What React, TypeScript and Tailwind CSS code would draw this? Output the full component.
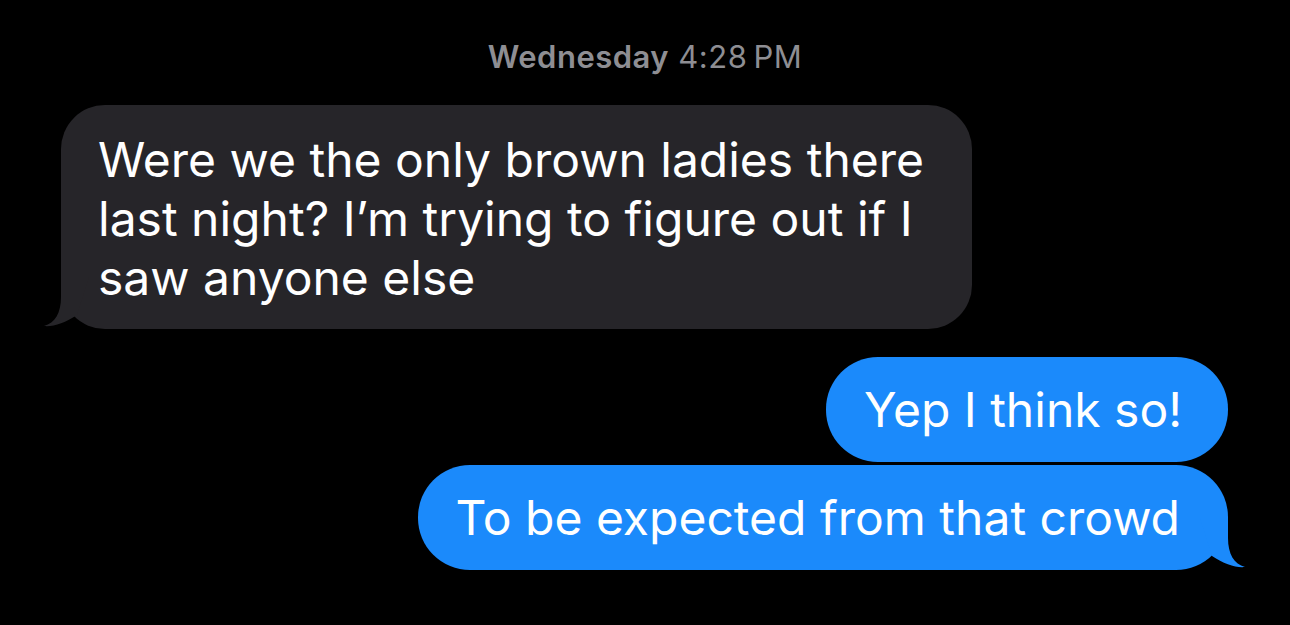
import React from 'react'

function Tail({ color, side }: { color: string; side: 'left' | 'right' }) {
  return (
    <svg
      width="50"
      height="52"
      viewBox="0 0 50 52"
      className={`absolute bottom-0 ${side === 'right' ? 'right-[-22px]' : 'left-[-22px] scale-x-[-1]'}`}
    >
      <path d="M28 0 L28 20 C28 36 34 46 45 49 C36 50 24 46 12 38 L0 0 Z" fill={color} />
    </svg>
  )
}

export default function App() {
  return (
    <div className="w-full h-[625px] bg-black overflow-hidden font-['Inter','Liberation_Sans',sans-serif] text-white">
      {/* Timestamp */}
      <div className="pt-[37px] text-center text-[31px] leading-[40px] tracking-[0.5px] text-[#8e8e93]">
        <span className="font-semibold">Wednesday</span> 4:28&#8201;PM
      </div>

      {/* Incoming */}
      <div className="mt-[28px] ml-[61px]">
        <div className="relative w-[911px] rounded-[44px] bg-[#262529] pl-[37px] pt-[25px] pb-[22px] text-[48px] leading-[59px]">
          Were we the only brown ladies there
          <br />
          last night? I’m trying to figure out if I
          <br />
          saw anyone else
          <Tail color="#262529" side="left" />
        </div>
      </div>

      {/* Outgoing */}
      <div className="mt-[28px] flex flex-col items-end gap-[3px] pr-[62px]">
        <div className="relative rounded-[52px] bg-[#1b8afb] pl-[38px] pr-[46px] py-[23px] text-[48px] leading-[59px]">
          Yep I think so!
        </div>
        <div className="relative rounded-[52px] bg-[#1b8afb] pl-[38px] pr-[48px] py-[23px] text-[48px] leading-[59px]">
          To be expected from that crowd
          <Tail color="#1b8afb" side="right" />
        </div>
      </div>
    </div>
  )
}
